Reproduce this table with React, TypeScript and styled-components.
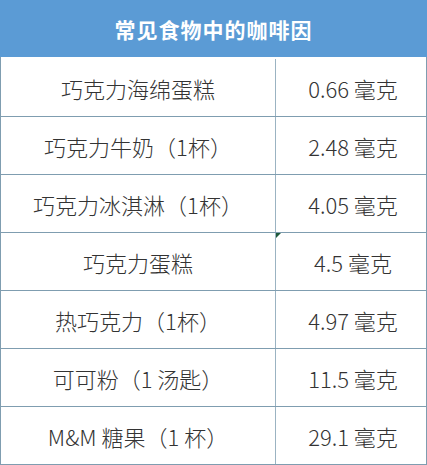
import styled, { createGlobalStyle } from "styled-components";

const GlobalStyle = createGlobalStyle`
  html, body {
    margin: 0;
    padding: 0;
    background: #ffffff;
  }
  body {
    font-family: "Noto Sans CJK SC", "Noto Sans", sans-serif;
  }
`;

const rows: [string, string][] = [
  ["巧克力海绵蛋糕", "0.66 毫克"],
  ["巧克力牛奶（1杯）", "2.48 毫克"],
  ["巧克力冰淇淋（1杯）", "4.05 毫克"],
  ["巧克力蛋糕", "4.5 毫克"],
  ["热巧克力（1杯）", "4.97 毫克"],
  ["可可粉（1 汤匙）", "11.5 毫克"],
  ["M&M 糖果（1 杯）", "29.1 毫克"],
];

export default function App() {
  return (
    <>
      <GlobalStyle />
      <Table>
        <Header>常见食物中的咖啡因</Header>
        <Body>
          {rows.map(([food, amount], i) => (
            <Row key={food}>
              <FoodCell>{food}</FoodCell>
              <AmountCell $marked={i === 2}>{amount}</AmountCell>
            </Row>
          ))}
        </Body>
      </Table>
    </>
  );
}

const Table = styled.div`
  width: 427px;
  height: 465px;
  box-sizing: border-box;
`;

const Header = styled.div`
  height: 57px;
  background: #5b9bd5;
  color: #ffffff;
  font-size: 21px;
  font-weight: 700;
  display: flex;
  align-items: center;
  justify-content: center;
  letter-spacing: 1px;
`;

const Body = styled.div`
  padding-top: 2px;
  border-left: 1px solid #7f9db0;
  border-right: 1px solid #7f9db0;
`;

const Row = styled.div`
  display: grid;
  grid-template-columns: 275px 1fr;
  height: 58px;
  box-sizing: border-box;
  border-bottom: 1px solid #7f9db0;
`;

const Cell = styled.div`
  display: flex;
  align-items: center;
  justify-content: center;
  font-size: 22px;
  color: #333333;
  font-weight: 300;
`;

const FoodCell = styled(Cell)`
  border-right: 1px solid #9bb3c2;
`;

const AmountCell = styled(Cell)<{ $marked?: boolean }>`
  position: relative;
  padding-left: 4px;

  &::after {
    content: "";
    display: ${(p) => (p.$marked ? "block" : "none")};
    position: absolute;
    left: 0;
    bottom: -6px;
    width: 0;
    height: 0;
    border-top: 5px solid #1f5a3c;
    border-right: 5px solid transparent;
  }
`;
